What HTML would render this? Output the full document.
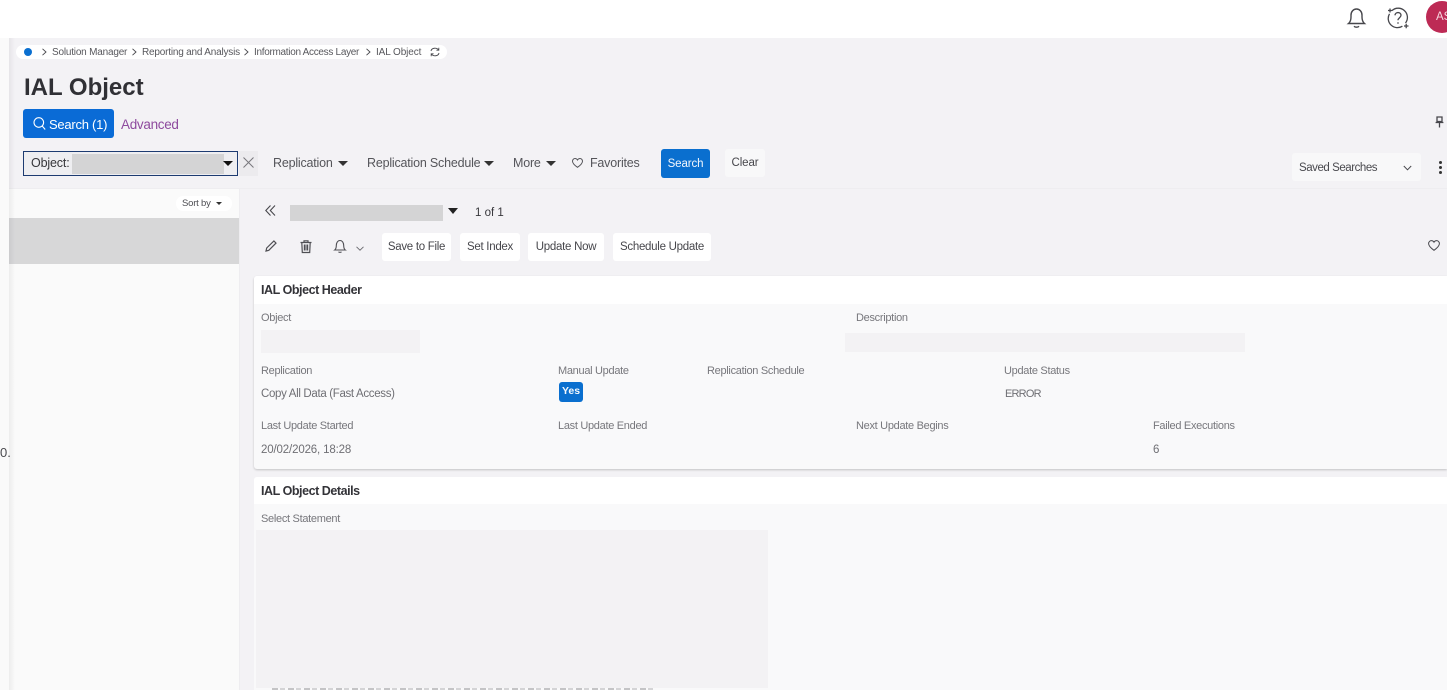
<!DOCTYPE html>
<html><head><meta charset="utf-8"><title>IAL Object</title>
<style>
html,body{margin:0;padding:0}
body{width:1447px;height:690px;position:relative;overflow:hidden;background:#f3f2f5;font-family:"Liberation Sans","Noto Sans CJK JP",sans-serif;color:#4a4a4f}
.a{position:absolute;box-sizing:border-box}
.t{position:absolute;white-space:nowrap;line-height:16px}
.f{font-size:11px;color:#77777c;letter-spacing:-.3px}
.v{font-size:11.5px;color:#6f6f74;letter-spacing:-.33px}
.b{position:absolute;background:#fff;border-radius:3px;height:28px;line-height:28px;text-align:center;font-size:11.5px;color:#47474c;letter-spacing:-.28px}
.c{font-size:10px;color:#58585d;letter-spacing:-.2px;line-height:14px}
.m{font-size:12.5px;color:#55555a;letter-spacing:-.2px}
.h{font-size:12.5px;font-weight:700;color:#333338;letter-spacing:-.45px}
svg{position:absolute;overflow:visible;fill:none;stroke:#47474c}
.tri{position:absolute;width:0;height:0;border-left:5px solid transparent;border-right:5px solid transparent;border-top:5px solid #333}
</style></head><body>
<div class="a" style="left:0;top:0;width:1447px;height:38px;background:#fff"></div>
<div class="a" style="left:0;top:38px;width:9px;height:652px;background:#fafafa"></div>

<svg style="left:1347px;top:7px" width="20" height="22" viewBox="0 0 20 22" stroke-width="1.4"><path d="M1.5 16.5C3.6 14.8 4 13 4 10V8.2C4 4.6 6.4 2 9.500 2S15 4.600 15 8.200V10c0 3 .5 4.800 2.500 6.500Z"/><path d="M7 19.200c1.300 1.300 3.700 1.300 5 0"/></svg>
<svg style="left:1387px;top:7px" width="22" height="22" viewBox="0 0 22 22" stroke-width="1.3"><path d="M5 3.600A9.200 9.200 0 0 1 18.500 16M15.400 19.200A9.200 9.200 0 0 1 2.500 6.800"/><path d="M8 8.300c.2-3.600 6-3.700 6 0 0 2.400-3 2.500-3 5"/><path d="M11 15.200v1.600M1 3.500h4M3 1.500v4M17 19h4.500M19.200 16.800v4.400"/></svg>
<div class="a" style="left:1426px;top:1px;width:32px;height:32px;border-radius:50%;background:#bd2a55"></div>
<div class="t" style="left:1436px;top:9px;font-size:11.5px;color:#f6d6df">AS</div>

<div class="a" style="left:16px;top:45px;width:431px;height:14px;background:#fff;border-radius:7px"></div>
<div class="a" style="left:24px;top:48px;width:8px;height:8px;border-radius:50%;background:#0a6fd0"></div>
<svg style="left:41px;top:48px" width="6" height="8" viewBox="0 0 6 8" stroke-width=".9"><path d="M1.500 .8 5 4 1.500 7.200"/></svg>
<div class="t c" style="left:52px;top:46px">Solution Manager</div>
<svg style="left:131px;top:48px" width="6" height="8" viewBox="0 0 6 8" stroke-width=".9"><path d="M1.500 .8 5 4 1.500 7.200"/></svg>
<div class="t c" style="left:142px;top:46px">Reporting and Analysis</div>
<svg style="left:243px;top:48px" width="6" height="8" viewBox="0 0 6 8" stroke-width=".9"><path d="M1.500 .8 5 4 1.500 7.200"/></svg>
<div class="t c" style="left:254px;top:46px;letter-spacing:-.3px">Information Access Layer</div>
<svg style="left:365px;top:48px" width="6" height="8" viewBox="0 0 6 8" stroke-width=".9"><path d="M1.500 .8 5 4 1.500 7.200"/></svg>
<div class="t c" style="left:376px;top:46px;letter-spacing:-.1px">IAL Object</div>
<svg style="left:430px;top:47px" width="10" height="10" viewBox="0 0 10 10" stroke-width=".9"><path d="M1 4C1.600 1 6.500 0 8.500 3M9 6c-.6 3-5.500 4-7.500 1M8.800 .8v2.400H6.400M1.200 9.200V6.800h2.400"/></svg>

<div class="t" style="left:24px;top:72px;font-size:24px;line-height:32px;font-weight:700;color:#303035">IAL Object</div>
<div class="a" style="left:23px;top:109px;width:91px;height:29px;background:#0a6bd6;border-radius:3px"></div>
<svg style="left:33px;top:117px;stroke:#fff" width="13" height="13" viewBox="0 0 13 13" stroke-width="1.100"><circle cx="5.800" cy="5.500" r="4.800"/><path d="M9.200 9 12.200 12.500"/></svg>
<div class="t" style="left:49px;top:116px;font-size:13px;color:#fff;letter-spacing:-.25px;line-height:17px">Search (1)</div>
<div class="t" style="left:121px;top:116px;font-size:13.500px;color:#8e4a9e;letter-spacing:-.3px;line-height:17px">Advanced</div>

<div class="a" style="left:23px;top:151px;width:215px;height:25px;background:#eeeef1;border:1.500px solid #1d3b71"></div>
<div class="t" style="left:31px;top:155px;font-size:12.500px;color:#36363a;letter-spacing:-.15px">Object:</div>
<div class="a" style="left:72px;top:154px;width:152px;height:20px;background:#d4d4d5"></div>
<div class="tri" style="left:223px;top:161px;border-top-color:#111"></div>
<div class="a" style="left:239px;top:151px;width:19px;height:25px;background:#ecebee"></div>
<svg style="left:243px;top:157px;stroke:#77777c" width="11" height="11" viewBox="0 0 11 11" stroke-width="1"><path d="M.5.500 10.500 10.500M10.500.500 .5 10.500"/></svg>
<div class="t m" style="left:273px;top:155px">Replication</div>
<div class="tri" style="left:338px;top:161px"></div>
<div class="t m" style="left:367px;top:155px">Replication Schedule</div>
<div class="tri" style="left:484px;top:161px"></div>
<div class="t m" style="left:513px;top:155px">More</div>
<div class="tri" style="left:546px;top:161px"></div>
<svg style="left:572px;top:158px;stroke:#55555a" width="11" height="10" viewBox="0 0 11 10" stroke-width="1"><path d="M5.500 9.300C2 6.800.5 5.200.5 3.200.5 1.500 1.800.5 3 .5c1.100 0 2 .6 2.500 1.500C6 1.100 6.900.5 8 .5c1.200 0 2.500 1 2.500 2.700 0 2-1.500 3.600-5 6.100Z"/></svg>
<div class="t m" style="left:590px;top:155px">Favorites</div>
<div class="a" style="left:661px;top:149px;width:49px;height:29px;background:#0a6fcf;border-radius:3px;color:#f2f7fd;font-size:11.500px;line-height:30px;text-align:center;letter-spacing:-.1px">Search</div>
<div class="b" style="left:725px;top:149px;width:40px;background:#f8f8f9;letter-spacing:-.1px;line-height:29px">Clear</div>
<div class="a" style="left:1292px;top:153px;width:129px;height:28px;background:#f8f8f9;border-radius:3px"></div>
<div class="t" style="left:1299px;top:160px;font-size:11.500px;color:#4a4a4f;letter-spacing:-.45px">Saved Searches</div>
<svg style="left:1403px;top:165px" width="9" height="6" viewBox="0 0 9 6" stroke-width="1"><path d="M.8 1 4.500 4.800 8.200 1"/></svg>
<div class="a" style="left:1439px;top:161px;width:3px;height:3px;border-radius:50%;background:#333"></div>
<div class="a" style="left:1439px;top:166px;width:3px;height:3px;border-radius:50%;background:#333"></div>
<div class="a" style="left:1439px;top:171px;width:3px;height:3px;border-radius:50%;background:#333"></div>
<svg style="left:1435px;top:116px" width="9" height="12" viewBox="0 0 9 12" stroke-width="1.300"><path d="M2 1h5v4.500H2ZM.6 6.500h7.800M4.500 6.500V11.500"/></svg>

<div class="a" style="left:9px;top:188px;width:1438px;height:1px;background:#eeedf0"></div>
<div class="a" style="left:9px;top:189px;width:231px;height:501px;background:#fafafa"></div>
<div class="a" style="left:9px;top:218px;width:230px;height:46px;background:#d7d7d8"></div>
<div class="a" style="left:9px;top:38px;width:6px;height:652px;background:linear-gradient(90deg,rgba(0,0,0,.055),rgba(0,0,0,0))"></div>
<div class="a" style="left:239px;top:189px;width:1px;height:501px;background:#eeedf0"></div>
<div class="a" style="left:176px;top:196px;width:56px;height:15px;background:#fff;border-radius:7px"></div>
<div class="t" style="left:182px;top:196px;font-size:9.500px;line-height:15px;color:#4f4f54;letter-spacing:-.2px">Sort by</div>
<div class="tri" style="left:216px;top:202px;border-left-width:3.500px;border-right-width:3.500px;border-top-width:3.500px"></div>

<svg style="left:265px;top:205px" width="11" height="11" viewBox="0 0 11 11" stroke-width="1.100"><path d="M5.500.5.800 5.500 5.500 10.500M10 .5 5.300 5.500 10 10.500"/></svg>
<div class="a" style="left:290px;top:205px;width:153px;height:16px;background:#d4d4d5"></div>
<div class="tri" style="left:448px;top:208px;border-top-color:#222;border-left-width:5.500px;border-right-width:5.500px;border-top-width:6px"></div>
<div class="t" style="left:475px;top:205px;font-size:11.500px;color:#38383c">1 of 1</div>

<svg style="left:265px;top:240px;stroke:#4f4f54" width="12" height="12" viewBox="0 0 12 12" stroke-width="1.200"><path d="M1 11 1.700 8 8.900 1 11 3.100 3.800 10.300Z"/></svg>
<svg style="left:300px;top:240px;stroke:#4f4f54" width="12" height="13" viewBox="0 0 12 13" stroke-width="1.200"><path d="M.5 2.500h11M4 2.500V.8h4v1.700M1.800 2.500l.5 10h7.400l.5-10M4.400 4.500v6M6 4.500v6M7.600 4.500v6"/></svg>
<svg style="left:334px;top:240px;stroke:#4f4f54" width="12" height="13" viewBox="0 0 12 13" stroke-width="1.100"><path d="M.7 10C2 9 2.300 7.500 2.300 5.500 2.300 2.700 3.800.5 6 .5s3.700 2.200 3.700 5c0 2 .3 3.500 1.600 4.500Z"/><path d="M4.500 11.800c.8.700 2.200.7 3 0"/></svg>
<svg style="left:356px;top:246px;stroke:#6a6a6f" width="8" height="5" viewBox="0 0 8 5" stroke-width=".9"><path d="M.5.800 4 4.200 7.500.800"/></svg>
<div class="b" style="left:382px;top:233px;width:69px">Save to File</div>
<div class="b" style="left:460px;top:233px;width:60px">Set Index</div>
<div class="b" style="left:528px;top:233px;width:76px">Update Now</div>
<div class="b" style="left:613px;top:233px;width:98px">Schedule Update</div>
<svg style="left:1428px;top:240px" width="12" height="11" viewBox="0 0 12 11" stroke-width="1"><path d="M6 10.300C2.300 7.600.6 5.800.6 3.600.6 1.800 2 .6 3.400.6 4.500.6 5.500 1.200 6 2.200 6.500 1.200 7.500.6 8.600.6 10 .6 11.400 1.800 11.400 3.600c0 2.200-1.700 4-5.400 6.700Z"/></svg>

<div class="a" style="left:254px;top:276px;width:1193px;height:193px;background:#f9f9fa;border-radius:3px 0 0 3px;box-shadow:0 1px 2px rgba(0,0,0,.2)"></div>
<div class="a" style="left:254px;top:276px;width:1193px;height:28px;background:#fff;border-radius:3px 0 0 0"></div>
<div class="t h" style="left:261px;top:282px">IAL Object Header</div>
<div class="t f" style="left:261px;top:310px">Object</div>
<div class="a" style="left:261px;top:330px;width:159px;height:23px;background:#f3f2f4"></div>
<div class="t f" style="left:856px;top:310px">Description</div>
<div class="a" style="left:845px;top:333px;width:400px;height:19px;background:#f3f2f4"></div>
<div class="t f" style="left:261px;top:363px">Replication</div>
<div class="t f" style="left:558px;top:363px">Manual Update</div>
<div class="t f" style="left:707px;top:363px">Replication Schedule</div>
<div class="t f" style="left:1004px;top:363px">Update Status</div>
<div class="t v" style="left:261px;top:386px">Copy All Data (Fast Access)</div>
<div class="a" style="left:559px;top:382px;width:24px;height:20px;border-radius:3px;background:#0a6fcf;color:#f4f8fd;font-size:10.500px;font-weight:700;line-height:19px;text-align:center">Yes</div>
<div class="t v" style="left:1005px;top:386px;font-size:11px;letter-spacing:-.8px">ERROR</div>
<div class="t f" style="left:261px;top:418px">Last Update Started</div>
<div class="t f" style="left:558px;top:418px">Last Update Ended</div>
<div class="t f" style="left:856px;top:418px">Next Update Begins</div>
<div class="t f" style="left:1153px;top:418px">Failed Executions</div>
<div class="t v" style="left:261px;top:442px;letter-spacing:-.15px">20/02/2026, 18:28</div>
<div class="t v" style="left:1153px;top:442px">6</div>

<div class="a" style="left:254px;top:477px;width:1193px;height:213px;background:#f9f9fa;border-radius:3px 0 0 0"></div>
<div class="a" style="left:254px;top:477px;width:1193px;height:27px;background:#fff;border-radius:3px 0 0 0"></div>
<div class="t h" style="left:261px;top:483px">IAL Object Details</div>
<div class="t f" style="left:261px;top:511px">Select Statement</div>
<div class="a" style="left:256px;top:530px;width:512px;height:158px;background:#f3f2f4"></div>
<div class="a" style="left:272px;top:688px;width:384px;height:2px;background:repeating-linear-gradient(90deg,#c4c4c6 0 6px,#f9f9fa 6px 8px,#d4d4d6 8px 13px,#f9f9fa 13px 16px)"></div>
<div class="t" style="left:0;top:445px;font-size:13px;color:#4a4a4f;width:10px;overflow:hidden">0.</div>
</body></html>
